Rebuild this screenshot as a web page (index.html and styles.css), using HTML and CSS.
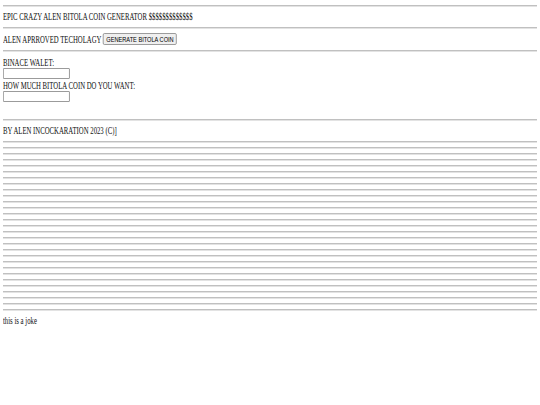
FILE: index.html
```html
<!DOCTYPE html>
<html>
<head>
<meta charset="utf-8">
<title>EPIC CRAZY ALEN BITOLA COIN GENERATOR</title>
<link rel="stylesheet" href="styles.css">
</head>
<body>
<div class="page">
<hr class="rule">
<div class="row">EPIC CRAZY ALEN BITOLA COIN GENERATOR $$$$$$$$$$$$$</div>
<hr class="rule">
<div class="row row-tech"><span class="tech-label">ALEN APRROVED TECHOLAGY</span><button class="btn" type="button">GENERATE BITOLA COIN</button></div>
<hr class="rule">
<form class="form">
<div class="label">BINACE WALET:</div>
<input class="field" type="text">
<div class="label">HOW MUCH BITOLA COIN DO YOU WANT:</div>
<input class="field" type="text">
<div class="blank"></div>
</form>
<hr class="rule">
<div class="row">BY ALEN INCOCKARATION 2023 (C)]</div>
<hr class="rule"><hr class="rule"><hr class="rule"><hr class="rule"><hr class="rule">
<hr class="rule"><hr class="rule"><hr class="rule"><hr class="rule"><hr class="rule">
<hr class="rule"><hr class="rule"><hr class="rule"><hr class="rule"><hr class="rule">
<hr class="rule"><hr class="rule"><hr class="rule"><hr class="rule"><hr class="rule">
<hr class="rule"><hr class="rule"><hr class="rule"><hr class="rule"><hr class="rule">
<hr class="rule"><hr class="rule"><hr class="rule"><hr class="rule">
<div class="row">this is a joke</div>
</div>
</body>
</html>
```
FILE: styles.css
```css
html, body {
  margin: 0;
  padding: 0;
  background: #ffffff;
}
.page {
  display: flow-root;
  padding: 0.5px 3.375px 0;
  font-family: "Liberation Serif", "Times New Roman", serif;
  font-size: 9.6px;
  line-height: 11px;
  color: #111111;
}
.rule {
  border: 0;
  border-top: 1px solid #c0c0c0;
  border-bottom: 1px solid #e3e3e3;
  height: 0;
  margin: 4px 0;
}
.row {
  width: max-content;
  white-space: nowrap;
  transform: scaleX(0.703125);
  transform-origin: 0 0;
  padding: 0.5px 0;
}
.row-tech {
  display: flex;
  align-items: center;
  gap: 2.4px;
  height: 13px;
  padding: 0;
}
.tech-label {
  line-height: 11px;
}
.btn {
  font-family: "Liberation Sans", Arial, sans-serif;
  font-size: 8px;
  line-height: 9px;
  height: 12.6px;
  padding: 0 3.6px;
  margin: 0;
  border: 1px solid #8c8c8c;
  border-radius: 2px;
  background: #efefef;
  color: #000000;
}
.form {
  margin: 5px 0 0;
  width: max-content;
  white-space: nowrap;
  transform: scaleX(0.703125);
  transform-origin: 0 0;
}
.label {
  height: 11px;
}
.field {
  display: block;
  box-sizing: border-box;
  width: 95.4px;
  height: 11.5px;
  margin: 0 0 0.5px;
  padding: 0;
  border: 1px solid #8a8a8a;
  border-radius: 1px;
  background: #ffffff;
  font-size: 8px;
}
.blank {
  height: 12px;
}
```
